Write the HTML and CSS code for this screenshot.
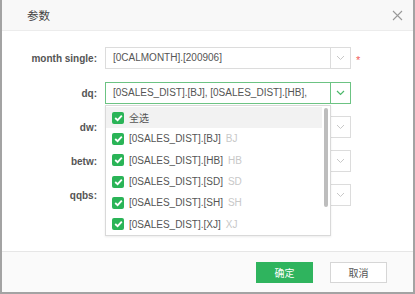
FILE: index.html
```html
<!DOCTYPE html>
<html>
<head>
<meta charset="utf-8">
<link rel="stylesheet" href="styles.css">
</head>
<body>
<div class="dialog">
  <div class="header">
    <span class="title">参数</span>
    <svg class="close" width="11" height="11" viewBox="0 0 11 11"><path d="M1 1 L10 10 M10 1 L1 10" stroke="#999" stroke-width="1.1" fill="none"/></svg>
  </div>
  <div class="body">
    <div class="form">
      <div class="row">
        <label class="label">month single:</label>
        <div class="select"><span class="value">[0CALMONTH].[200906]</span><span class="arrow"><svg width="9" height="6" viewBox="0 0 9 6"><path d="M1 1 L4.5 4.5 L8 1" stroke="#c8c8c8" stroke-width="1" fill="none"/></svg></span></div>
        <span class="req">*</span>
      </div>
      <div class="row second">
        <label class="label">dq:</label>
        <div class="select active"><span class="value">[0SALES_DIST].[BJ], [0SALES_DIST].[HB],</span><span class="arrow"><svg width="9" height="6" viewBox="0 0 9 6"><path d="M1 1 L4.5 4.5 L8 1" stroke="#4cb86a" stroke-width="1.2" fill="none"/></svg></span></div>
        <div class="dropdown">
          <div class="item hl"><span class="cb"><svg width="9" height="8" viewBox="0 0 9 8"><path d="M1.2 4 L3.6 6.2 L7.8 1.6" stroke="#fff" stroke-width="1.8" fill="none"/></svg></span><span class="txt">全选</span></div>
          <div class="item"><span class="cb"><svg width="9" height="8" viewBox="0 0 9 8"><path d="M1.2 4 L3.6 6.2 L7.8 1.6" stroke="#fff" stroke-width="1.8" fill="none"/></svg></span><span class="txt">[0SALES_DIST].[BJ]</span><span class="hint">BJ</span></div>
          <div class="item"><span class="cb"><svg width="9" height="8" viewBox="0 0 9 8"><path d="M1.2 4 L3.6 6.2 L7.8 1.6" stroke="#fff" stroke-width="1.8" fill="none"/></svg></span><span class="txt">[0SALES_DIST].[HB]</span><span class="hint">HB</span></div>
          <div class="item"><span class="cb"><svg width="9" height="8" viewBox="0 0 9 8"><path d="M1.2 4 L3.6 6.2 L7.8 1.6" stroke="#fff" stroke-width="1.8" fill="none"/></svg></span><span class="txt">[0SALES_DIST].[SD]</span><span class="hint">SD</span></div>
          <div class="item"><span class="cb"><svg width="9" height="8" viewBox="0 0 9 8"><path d="M1.2 4 L3.6 6.2 L7.8 1.6" stroke="#fff" stroke-width="1.8" fill="none"/></svg></span><span class="txt">[0SALES_DIST].[SH]</span><span class="hint">SH</span></div>
          <div class="item"><span class="cb"><svg width="9" height="8" viewBox="0 0 9 8"><path d="M1.2 4 L3.6 6.2 L7.8 1.6" stroke="#fff" stroke-width="1.8" fill="none"/></svg></span><span class="txt">[0SALES_DIST].[XJ]</span><span class="hint">XJ</span></div>
          <div class="scrollbar"></div>
        </div>
      </div>
      <div class="row">
        <label class="label">dw:</label>
        <div class="select"><span class="value"></span><span class="arrow"><svg width="9" height="6" viewBox="0 0 9 6"><path d="M1 1 L4.5 4.5 L8 1" stroke="#c8c8c8" stroke-width="1" fill="none"/></svg></span></div>
      </div>
      <div class="row">
        <label class="label">betw:</label>
        <div class="select"><span class="value"></span><span class="arrow"><svg width="9" height="6" viewBox="0 0 9 6"><path d="M1 1 L4.5 4.5 L8 1" stroke="#c8c8c8" stroke-width="1" fill="none"/></svg></span></div>
      </div>
      <div class="row">
        <label class="label">qqbs:</label>
        <div class="select"><span class="value"></span><span class="arrow"><svg width="9" height="6" viewBox="0 0 9 6"><path d="M1 1 L4.5 4.5 L8 1" stroke="#c8c8c8" stroke-width="1" fill="none"/></svg></span></div>
      </div>
    </div>
  </div>
  <div class="footer">
    <button class="btn primary">确定</button>
    <button class="btn">取消</button>
  </div>
</div>
</body>
</html>
```
FILE: styles.css
```css
html, body { margin: 0; padding: 0; background: #fff; }
body { width: 415px; height: 294px; overflow: hidden; font-family: "Liberation Sans", Arial, "Noto Sans CJK SC", sans-serif; }
.dialog {
  width: 415px; height: 294px; box-sizing: border-box;
  border-left: 2px solid #a3a3a3; border-right: 2px solid #a3a3a3; border-bottom: 2px solid #a3a3a3;
  display: flex; flex-direction: column; background: #fff;
}
.header {
  height: 30px; flex: none; background: #f8f8f8; border-bottom: 1px solid #ececec;
  display: flex; align-items: center; justify-content: space-between;
  padding: 0 10px 0 25px;
}
.title { font-size: 11.5px; color: #444; font-family: "Noto Sans CJK SC", sans-serif; }
.close { display: block; }
.body { flex: 1; padding-top: 16px; }
.form { display: flex; flex-direction: column; gap: 12px; }
.row { display: flex; align-items: center; height: 22px; position: relative; }
.row.second { margin-top: 1px; }
.label { width: 95px; text-align: right; font-size: 10px; font-weight: bold; color: #555; flex: none; margin-right: 8px; }
.select {
  width: 246px; height: 22px; box-sizing: border-box; border: 1px solid #dcdcdc;
  display: flex; align-items: stretch; background: #fff;
}
.select .value { flex: 1; font-size: 10px; color: #555; padding-left: 7px; line-height: 20px; white-space: nowrap; overflow: hidden; }
.select .arrow { width: 19px; border-left: 1px solid #dcdcdc; display: flex; align-items: center; justify-content: center; }
.select.active { border-color: #6cc383; }
.select.active .arrow { border-left-color: #6cc383; }
.req { color: #f25a5a; font-size: 11px; margin-left: 5px; margin-top: 3px; }
.dropdown {
  position: absolute; left: 103px; top: 23px; width: 226px; height: 131px; box-sizing: border-box;
  border: 1px solid #d9d9d9; background: #fff; z-index: 5; box-shadow: 0 1px 2px rgba(0,0,0,0.08);
  padding-top: 1px;
}
.item { height: 21.3px; display: flex; align-items: center; padding-left: 6px; font-size: 10px; color: #555; }
.item.hl { background: #f2f2f2; margin-right: 8px; }
.cb { width: 12px; height: 12px; border-radius: 2px; background: #2ab457; display: flex; align-items: center; justify-content: center; margin-right: 5px; flex: none; }
.cb svg { display: block; }
.txt { white-space: nowrap; }
.item.hl .txt { font-family: "Noto Sans CJK SC", sans-serif; font-size: 10px; }
.hint { color: #c8c8c8; margin-left: 5px; }
.scrollbar { position: absolute; right: 2px; top: 2px; width: 4px; height: 99px; background: #bdbdbd; border-radius: 2px; }
.footer {
  height: 40px; flex: none; background: #fafafa; border-top: 1px solid #e6e6e6;
  display: flex; align-items: center; justify-content: flex-end; gap: 17px; padding-right: 26px;
}
.btn {
  width: 57px; height: 21px; box-sizing: border-box; border: 1px solid #d6d6d6; background: #fff;
  font-size: 10px; color: #555; font-family: "Noto Sans CJK SC", sans-serif; padding: 0; margin: 0;
}
.btn.primary { background: #2fb45e; border-color: #2fb45e; color: #fff; }
```
